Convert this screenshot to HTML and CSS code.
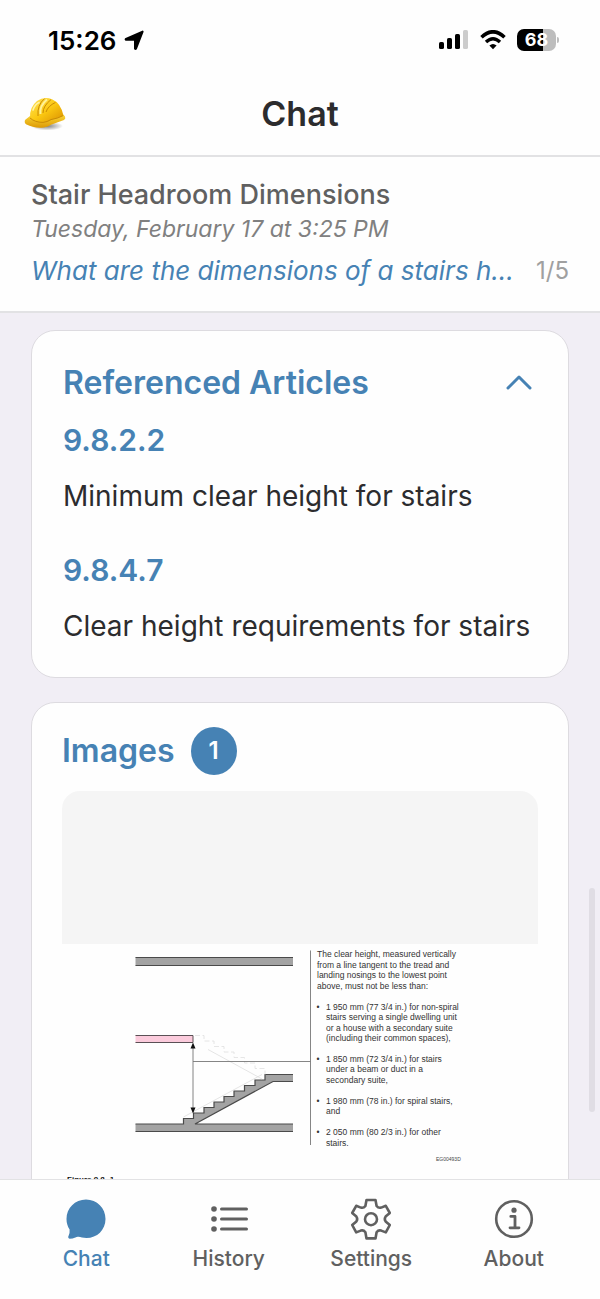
FILE: index.html
```html
<!DOCTYPE html>
<html lang="en">
<head>
    <meta charset="UTF-8">
    <meta name="viewport" content="width=device-width, initial-scale=1.0">
    <title>Chat</title>
    <link rel="stylesheet" href="styles.css">
</head>
<body>
    <div class="status-bar">
        <div class="status-left">
            <span>15:26</span>
            <svg width="21" height="21" viewBox="0 0 21 21"><path d="M18.6 1.6 L12 18.6 Q11.4 19.4 11 18.6 V10.6 Q11 9.8 10.2 9.8 H2 Q1.2 9.4 2 8.8 Z" stroke="#000" stroke-width="2" stroke-linejoin="round"/></svg>
        </div>
        <div class="status-right">
            <svg width="31" height="20" viewBox="0 0 31 20">
                <rect x="1" y="12" width="5" height="7" rx="1.6"/>
                <rect x="9" y="8" width="5" height="11" rx="1.6"/>
                <rect x="17" y="4" width="5" height="15" rx="1.6"/>
                <rect x="25" y="0" width="5" height="19" rx="1.6" fill="#cccccc"/>
            </svg>
            <svg width="26" height="20" viewBox="0 0 26 20">
                <path d="M1.5 7.2 Q13 -3.6 24.5 7.2" fill="none" stroke="#000" stroke-width="3.6"/>
                <path d="M6 12 Q13 5.4 20 12" fill="none" stroke="#000" stroke-width="3.4"/>
                <path d="M9.4 15.4 Q13 12.4 16.6 15.4 L13 19.2 Z"/>
            </svg>
            <span class="battery">68</span>
        </div>
    </div>

    <header class="header">
        <svg class="helmet" width="44" height="36" viewBox="0 0 44 36">
            <defs>
                <linearGradient id="dome" x1="0" y1="0" x2="1" y2="1">
                    <stop offset="0" stop-color="#ffe35a"/>
                    <stop offset="0.5" stop-color="#fbc811"/>
                    <stop offset="1" stop-color="#d98e00"/>
                </linearGradient>
                <linearGradient id="brim" x1="0" y1="0" x2="0" y2="1">
                    <stop offset="0" stop-color="#ffdf3d"/>
                    <stop offset="1" stop-color="#dd9a05"/>
                </linearGradient>
                <radialGradient id="shade">
                    <stop offset="0" stop-color="#000" stop-opacity="0.5"/>
                    <stop offset="1" stop-color="#000" stop-opacity="0"/>
                </radialGradient>
            </defs>
            <ellipse cx="24" cy="30" rx="16" ry="4.5" fill="url(#shade)"/>
            <path d="M2 24 Q1 27 3.5 28.5 Q11 32.5 21 31.4 Q25 31 28 28.8 L41 24 Q43 22.6 42 20.5 L39 17 L7 20 Z" fill="url(#brim)"/>
            <path d="M7 22 Q6.5 11 14 5 Q21 0 29 3.2 Q38 7 40.4 19.6 Q35 22.6 29 23.6 Q24 27.6 18 26.6 Q11 25.5 7 22 Z" fill="url(#dome)"/>
            <path d="M15 20 Q14 9 21.5 2.6 M20 17 Q20 10 28 3.6 M23 16 Q25 10 32.5 6.4" fill="none" stroke="#c98a05" stroke-width="1"/>
            <path d="M17.4 18 Q16.4 10 24 3.6" fill="none" stroke="#fff19a" stroke-width="2"/>
            <path d="M7 22 Q12 26.4 20 26.4 Q24 26 28 23.6 Q35 22.4 40.2 19.6" fill="none" stroke="#c88b08" stroke-width="1"/>
            <path d="M10 14 Q12 8 16 6.4" fill="none" stroke="#fff3a8" stroke-width="1.6" stroke-linecap="round"/>
        </svg>
        <h1>Chat</h1>
    </header>

    <section class="summary">
        <h2>Stair Headroom Dimensions</h2>
        <p class="date">Tuesday, February 17 at 3:25 PM</p>
        <div class="question-row">
            <a class="question" href="#">What are the dimensions of a stairs h...</a>
            <span class="count">1/5</span>
        </div>
    </section>

    <main class="content">
        <section class="card">
            <button class="card-header" type="button" aria-expanded="true">
                <span class="card-title">Referenced Articles</span>
                <svg width="28" height="20" viewBox="0 0 28 20"><path d="M3 15 L14 4 L25 15" fill="none" stroke="#4682b4" stroke-width="3" stroke-linecap="round" stroke-linejoin="round"/></svg>
            </button>
            <div class="article">
                <a href="#">9.8.2.2</a>
                <p>Minimum clear height for stairs</p>
            </div>
            <div class="article">
                <a href="#">9.8.4.7</a>
                <p>Clear height requirements for stairs</p>
            </div>
        </section>

        <section class="card images">
            <div class="images-header">
                <h2 class="card-title">Images</h2>
                <span class="badge">1</span>
            </div>
            <div class="placeholder"></div>
            <svg class="figure" viewBox="0 0 952 500">
                <!-- upper and lower floors -->
                <g fill="#a3a3a3">
                    <rect x="147" y="27" width="315" height="16"/>
                    <rect x="147" y="360" width="315" height="15"/>
                    <path d="M243 360 V349 H263 V338 H284 V327 H304 V316 H324 V305 H344 V294 H365 V283 H386 V272 H406 V261 H462 V275 H422 L266 360 Z"/>
                </g>
                <path d="M147 27 H462 M147 43 H462 M147 360 H243 V349 H263 V338 H284 V327 H304 V316 H324 V305 H344 V294 H365 V283 H386 V272 H406 V261 H462 M462 275 H422 L266 360 H462 M147 375 H462" fill="none" stroke="#4a4a4a" stroke-width="2.4"/>
                <!-- beam -->
                <rect x="147" y="183" width="115" height="14" fill="#fbcbdc"/>
                <path d="M147 183 H262 V197 H147" fill="none" stroke="#5a5055" stroke-width="2"/>
                <path d="M266 183 H284 V194 H304 V205 H324 V216 H344 V227 H365 V238 H386 V249 H406 V261" fill="none" stroke="#dedede" stroke-width="1.5" stroke-dasharray="10 5"/>
                <path d="M292 211 L400 270 M243 346 L400 261" fill="none" stroke="#dcdcdc" stroke-width="1.5"/>
                <!-- clear height -->
                <path d="M262 204 V334 M262 235 H497 M497 13 V402" fill="none" stroke="#777" stroke-width="1.8"/>
                <path d="M262 197 L267 209 H257 Z M262 339 L267 327 H257 Z" fill="#111"/>
                <g class="figure-text">
                    <text x="510" y="26">The clear height, measured vertically</text>
                    <text x="510" y="47">from a line tangent to the tread and</text>
                    <text x="510" y="68">landing nosings to the lowest point</text>
                    <text x="510" y="89">above, must not be less than:</text>
                    <text x="509" y="131">•</text>
                    <text x="528" y="131">1 950 mm (77 3/4 in.) for non-spiral</text>
                    <text x="528" y="152">stairs serving a single dwelling unit</text>
                    <text x="528" y="173">or a house with a secondary suite</text>
                    <text x="528" y="194">(including their common spaces),</text>
                    <text x="509" y="235">•</text>
                    <text x="528" y="235">1 850 mm (72 3/4 in.) for stairs</text>
                    <text x="528" y="256">under a beam or duct in a</text>
                    <text x="528" y="277">secondary suite,</text>
                    <text x="509" y="319">•</text>
                    <text x="528" y="319">1 980 mm (78 in.) for spiral stairs,</text>
                    <text x="528" y="340">and</text>
                    <text x="509" y="382">•</text>
                    <text x="528" y="382">2 050 mm (80 2/3 in.) for other</text>
                    <text x="528" y="403">stairs.</text>
                </g>
                <text class="figure-code" x="748" y="433">EG00493D</text>
                <text class="figure-caption" x="10" y="475">Figure 9.8.-1</text>
            </svg>
        </section>
        <div class="scroll-thumb"></div>
    </main>

    <nav class="tab-bar">
        <a class="tab active" href="#">
            <svg width="42" height="42" viewBox="0 0 42 42"><path d="M21 1.5 C32 1.5 40.5 10 40.5 21 C40.5 32 32 40 21.5 40 C18 40 15.6 39.2 13.4 38.8 Q12 38.6 10.4 39.4 Q7.6 40.8 4.6 40.8 Q2.4 40 3.6 37.8 Q5 34.6 4.6 31.6 C2.6 28.4 1.5 25 1.5 21 C1.5 10 10 1.5 21 1.5 Z" fill="#4682b4"/></svg>
            <span>Chat</span>
        </a>
        <a class="tab" href="#">
            <svg width="42" height="42" viewBox="0 0 42 42">
                <g fill="#606060"><circle cx="6" cy="11" r="2.8"/><circle cx="6" cy="21" r="2.8"/><circle cx="6" cy="31" r="2.8"/></g>
                <path d="M13.5 11 H38.5 M13.5 21 H38.5 M13.5 31 H38.5" stroke="#606060" stroke-width="3" stroke-linecap="round"/>
            </svg>
            <span>History</span>
        </a>
        <a class="tab" href="#">
            <svg width="42" height="42" viewBox="0 0 42 42" fill="none" stroke="#606060" stroke-width="2.6" stroke-linejoin="round">
                <path d="M16.5 2 H25.5 L26.6 8 Q28.4 10.4 31.2 9.6 L35.8 7.8 L39.8 15 L35.6 18.6 Q34 21 35.6 23.4 L39.8 27 L35.8 34.4 L31.2 32.6 Q28.4 31.8 26.6 34.2 L25.5 40.4 H16.5 L15.4 34.2 Q13.6 31.8 10.8 32.6 L6.2 34.4 L2.2 27 L6.4 23.4 Q8 21 6.4 18.6 L2.2 15 L6.2 7.8 L10.8 9.6 Q13.6 10.4 15.4 8 Z"/>
                <circle cx="21" cy="21.2" r="6"/>
            </svg>
            <span>Settings</span>
        </a>
        <a class="tab" href="#">
            <svg width="42" height="42" viewBox="0 0 42 42" fill="none" stroke="#606060" stroke-width="2.6" stroke-linecap="round">
                <circle cx="21" cy="21" r="17.8"/>
                <circle cx="21" cy="12.2" r="2.6" fill="#606060" stroke="none"/>
                <path d="M17.8 18.4 H22 V29.6 M17 29.8 H26" stroke-width="2.8" stroke-linejoin="round"/>
            </svg>
            <span>About</span>
        </a>
    </nav>
</body>
</html>
```
FILE: styles.css
```css
* { box-sizing: border-box; }
body { display: flex; flex-direction: column; height: 100vh; margin: 0; overflow: hidden; font-family: Inter, "Liberation Sans", sans-serif; background: #fefefe; color: #2c2c2e; }
h1, h2, p { margin: 0; }
a { text-decoration: none; }
svg { flex: none; }

.status-bar { display: flex; justify-content: space-between; align-items: center; height: 80px; padding: 0 44px 0 48px; color: #000; }
.status-left { display: flex; align-items: center; gap: 8px; font-size: 26px; font-weight: 600; }
.status-right { display: flex; align-items: center; gap: 11px; }
.battery { position: relative; width: 39px; height: 22px; border-radius: 7px; background: linear-gradient(to right, #000 66%, #bdbdbd 66%); color: #fff; font-size: 18px; font-weight: 700; line-height: 22px; text-align: center; }
.battery::after { content: ""; position: absolute; right: -3px; top: 8px; width: 2px; height: 6px; border-radius: 0 2px 2px 0; background: #bdbdbd; }

.header { display: grid; grid-template-columns: 1fr auto 1fr; align-items: center; height: 77px; padding: 0 23px 8px; border-bottom: 2px solid #e2e2e4; }
.header h1 { font-size: 34px; font-weight: 600; line-height: 40px; }

.summary { padding: 20px 31px; border-bottom: 2px solid #e2e2e4; }
.summary h2 { color: #606060; font-size: 27px; font-weight: 500; line-height: 36px; }
.date { color: #808080; font-size: 23px; font-style: italic; line-height: 32px; }
.question-row { display: flex; justify-content: space-between; margin-top: 6px; font-size: 26px; line-height: 40px; }
.question { color: #4682b4; font-style: italic; }
.count { color: #a0a0a0; font-size: 24px; }

.content { position: relative; flex: 1; min-height: 0; overflow: hidden; padding: 17px 31px 0; background: #f1eef5; }
.card { margin-bottom: 24px; padding: 32px 31px 29px; border: 1px solid #dddbe0; border-radius: 24px; background: #fefefe; }
.card-title { color: #4682b4; font-size: 32px; font-weight: 600; line-height: 40px; }
.card-header { display: flex; justify-content: space-between; align-items: center; width: 100%; padding: 0 4px 0 0; border: 0; background: none; font-family: inherit; text-align: left; cursor: pointer; }
.article { padding-top: 15px; }
.article a { display: block; color: #4682b4; font-size: 30px; font-weight: 600; line-height: 44px; }
.article p { margin-top: 12px; font-size: 28px; line-height: 44px; }
.article + .article { padding-top: 30px; }

.images { padding: 24px 30px 31px; }
.images-header { display: flex; align-items: center; gap: 16px; height: 48px; }
.badge { width: 46px; height: 48px; border-radius: 50%; background: #4682b4; color: #fff; font-size: 24px; font-weight: 600; line-height: 48px; text-align: center; }
.placeholder { height: 153px; margin-top: 16px; border-radius: 18px 18px 0 0; background: #f5f5f5; }
.figure { display: block; width: 100%; }
.figure-text { fill: #333; font: 17px "Liberation Sans", sans-serif; }
.figure-code { fill: #444; font: 10px "Liberation Sans", sans-serif; }
.figure-caption { fill: #111; font: bold 16px "Liberation Sans", sans-serif; }
.scroll-thumb { position: absolute; right: 5px; top: 575px; width: 6px; height: 224px; border-radius: 3px; background: #e0dde4; }

.tab-bar { display: grid; grid-template-columns: repeat(4, 1fr); height: 120px; padding: 18px 15px 0; border-top: 1px solid #e2e2e4; background: #fefefe; }
.tab { display: flex; flex-direction: column; align-items: center; gap: 4px; color: #606060; font-size: 21px; font-weight: 500; line-height: 30px; }
.tab.active { color: #4682b4; }
```
